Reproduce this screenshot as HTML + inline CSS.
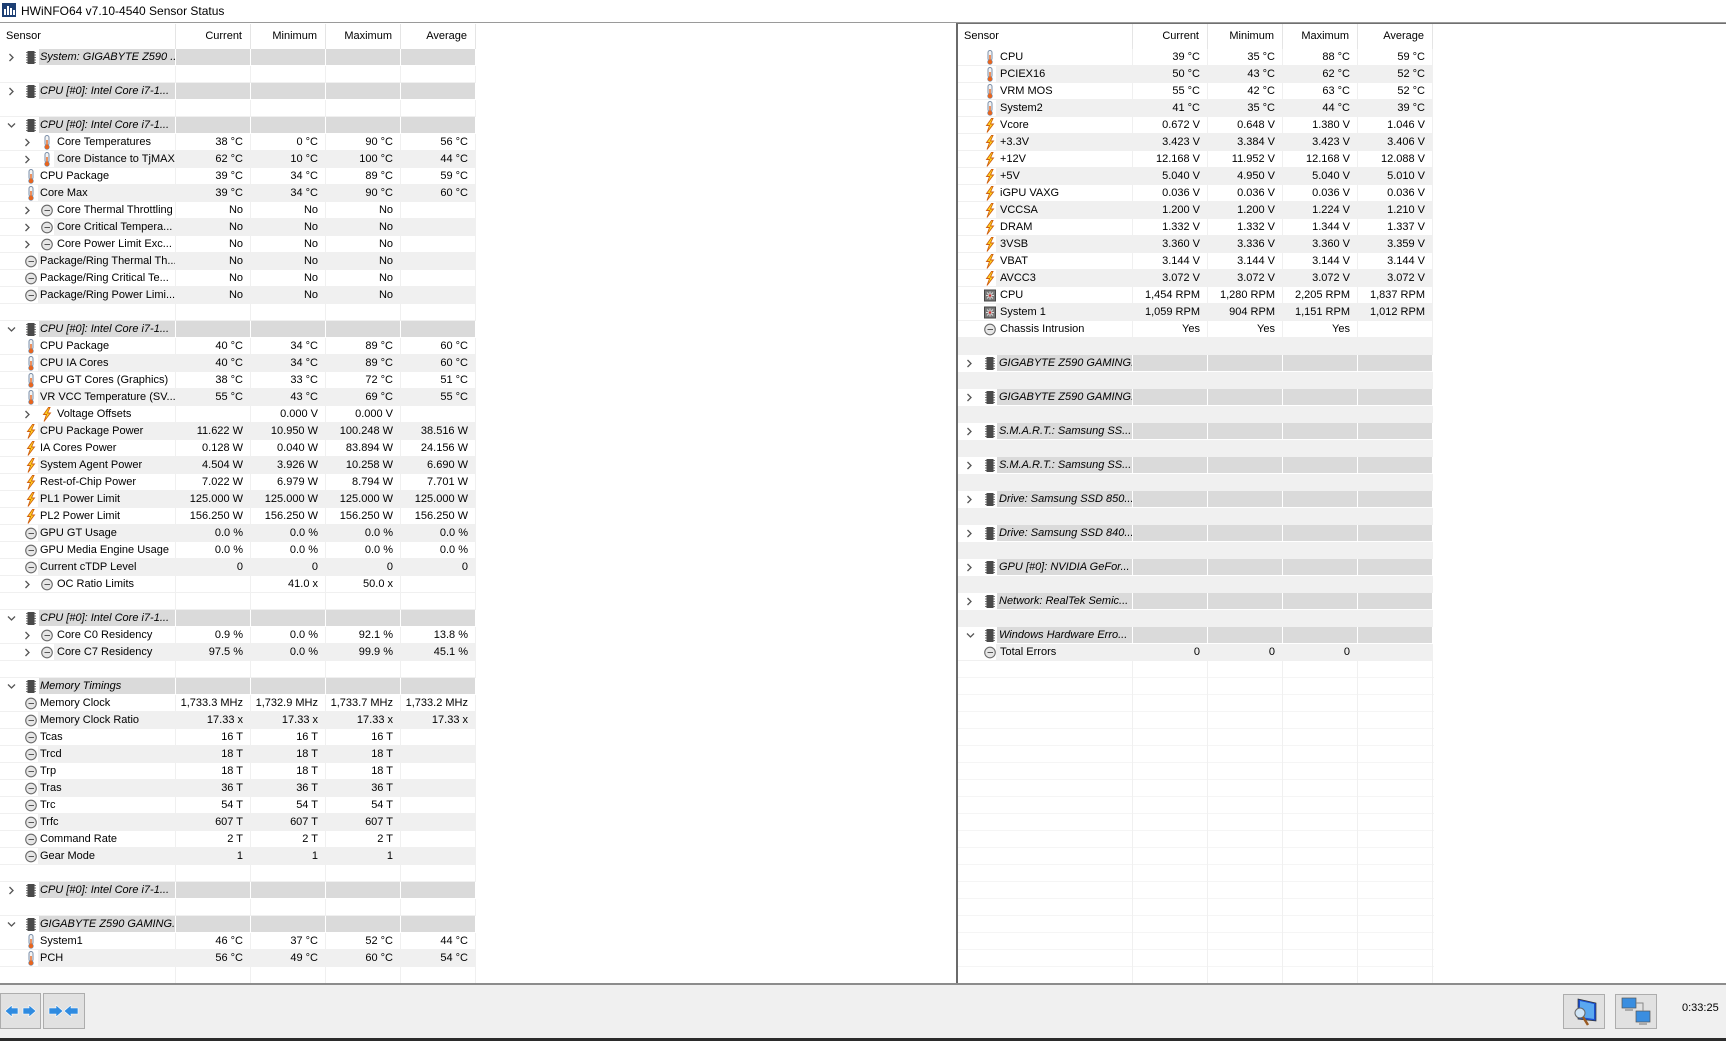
<!DOCTYPE html>
<html><head><meta charset="utf-8"><style>
*{margin:0;padding:0;box-sizing:border-box}
body{width:1726px;height:1041px;overflow:hidden;background:#fff;font-family:"Liberation Sans",sans-serif;font-size:11px;color:#000;position:relative}
#title{position:absolute;left:0;top:0;width:1726px;height:23px;background:#fff;border-bottom:1px solid #9a9a9a}
#title span{position:absolute;left:21px;top:4px;font-size:12px}
.pane{position:absolute;top:24px;height:959px;overflow:hidden;background:#fff}
#lp{left:0;width:955px}
#rp{left:958px;width:768px;border-top:1px solid #707070;top:23px}
#div{position:absolute;left:955px;top:23px;width:3px;height:960px;background:#e8e8e8;border-left:1px solid #fff;border-right:2px solid #6a6a6a}
.h{display:flex;height:25px;line-height:24px}
.h>div{width:75px;text-align:right;padding-right:8px;border-right:1px solid #e5e5e5}
.h>div.s{width:176px;text-align:left;padding-left:6px}
#rp .h>div.s{width:175px;padding-left:6px}
.r{display:flex;height:17px;line-height:17px}
.r>div{width:75px;text-align:right;padding-right:7px;border-right:1px solid #f0f0f0;border-bottom:1px solid #f0f0f0;white-space:nowrap;height:17px}
.r>div.s{width:176px;text-align:left;position:relative;padding-left:40px;padding-right:0;overflow:hidden}
#rp .r>div.s{width:175px;padding-left:42px}
.r.z>div{background:#f0f0f0}
.r.g>div{background:#dadada;border-right:1px solid #fff;border-bottom:1px solid #fff}
.r.g>div.s{background:linear-gradient(to right,#fff 39px,#dadada 39px);font-style:italic;padding-left:40px}
#rp .r.g>div.s{padding-left:41px}
.r.z.n>div.s,.r.n>div.s{background:linear-gradient(to right,#fff 38px,#f0f0f0 38px)}
.r.l2>div.s{padding-left:57px}
.ar{position:absolute;left:8px;top:4px;width:7px;height:9px}
.l2 .ar{left:24px}
.ic{position:absolute;left:25px;top:1px;width:12px;height:15px}
.l2 .ic{left:41px}
#rp .r .ic{left:26px}
#sb{position:absolute;left:0;top:983px;width:1726px;height:58px;background:#f0f0f0;border-top:2px solid #8c8c8c}
#sb .bl{position:absolute;left:0;bottom:0;height:3px;width:1726px;background:#2b2b2b}
.btn{position:absolute;top:8px;height:36px;border:1px solid #adadad;background:#e1e1e1}
#time{position:absolute;left:1682px;top:17px;font-size:11px}
</style></head><body>
<svg width="0" height="0" style="position:absolute">
<defs>
<symbol id="cr" viewBox="0 0 7 9"><path d="M1.5 1 L5 4.5 L1.5 8" fill="none" stroke="#555" stroke-width="1.3"/></symbol>
<symbol id="cd" viewBox="0 0 9 7"><path d="M1 1.5 L4.5 5 L8 1.5" fill="none" stroke="#555" stroke-width="1.3"/></symbol>
<symbol id="t" viewBox="0 0 12 15"><rect x="4" y="0.5" width="4" height="10" rx="2" fill="#f4f4f4" stroke="#7a8ea8"/><circle cx="6" cy="12" r="2.4" fill="#e8651e" stroke="#7a8ea8" stroke-width=".6"/><rect x="5.3" y="5" width="1.4" height="6" fill="#e8651e"/></symbol>
<symbol id="v" viewBox="0 0 12 15"><path d="M7.5 0.5 L2.5 7.5 L5.5 7.5 L3 14.5 L9.5 6 L6.5 6 L9 0.5 Z" fill="#ffd21e" stroke="#d06010" stroke-width=".9"/></symbol>
<symbol id="o" viewBox="0 0 12 15"><circle cx="6" cy="7.5" r="5.3" fill="#e6e6e6" stroke="#6a6a6a" stroke-width="1.1"/><path d="M6 7.5 L9 7.5 M3.5 7.5 L6 7.5" stroke="#555" stroke-width="1"/></symbol>
<symbol id="h" viewBox="0 0 12 15"><rect x="2.5" y="1" width="7" height="13" fill="#4a4a4a"/><path d="M1 2.5h1.5M1 5h1.5M1 7.5h1.5M1 10h1.5M1 12.5h1.5M9.5 2.5H11M9.5 5H11M9.5 7.5H11M9.5 10H11M9.5 12.5H11" stroke="#777"/></symbol>
<symbol id="f" viewBox="0 0 12 15"><rect x="0.5" y="2" width="11" height="11" fill="#777" stroke="#444"/><path d="M6 3.5v8M2 7.5h8M3 4.5l6 6M9 4.5l-6 6" stroke="#ddd" stroke-width="1"/><circle cx="6" cy="7.5" r="1.3" fill="#c33"/></symbol>
</defs></svg>

<div id="title"><svg style="position:absolute;left:2px;top:3px" width="14" height="14" viewBox="0 0 14 14"><rect width="14" height="14" fill="#1d3f74"/><rect x="2" y="6" width="2" height="6" fill="#fff"/><rect x="5" y="3" width="2" height="9" fill="#fff"/><rect x="8" y="5" width="2" height="7" fill="#fff"/><rect x="11" y="7" width="2" height="5" fill="#fff"/></svg><span>HWiNFO64 v7.10-4540 Sensor Status</span></div>

<div class="pane" id="lp">
<div class="h"><div class="s">Sensor</div><div>Current</div><div>Minimum</div><div>Maximum</div><div>Average</div></div>
<div class="r g"><div class="s"><svg class="ar"><use href="#cr"/></svg><svg class="ic"><use href="#h"/></svg>System: GIGABYTE Z590 ...</div><div></div><div></div><div></div><div></div></div>
<div class="r"><div class="s"></div><div></div><div></div><div></div><div></div></div>
<div class="r g"><div class="s"><svg class="ar"><use href="#cr"/></svg><svg class="ic"><use href="#h"/></svg>CPU [#0]: Intel Core i7-1...</div><div></div><div></div><div></div><div></div></div>
<div class="r"><div class="s"></div><div></div><div></div><div></div><div></div></div>
<div class="r g"><div class="s"><svg class="ar" style="width:9px;height:7px;top:5px;left:7px"><use href="#cd"/></svg><svg class="ic"><use href="#h"/></svg>CPU [#0]: Intel Core i7-1...</div><div></div><div></div><div></div><div></div></div>
<div class="r l2"><div class="s"><svg class="ar"><use href="#cr"/></svg><svg class="ic"><use href="#t"/></svg>Core Temperatures</div><div>38 °C</div><div>0 °C</div><div>90 °C</div><div>56 °C</div></div>
<div class="r z l2"><div class="s" style="background:linear-gradient(to right,#fff 54px,#f0f0f0 54px)"><svg class="ar"><use href="#cr"/></svg><svg class="ic"><use href="#t"/></svg>Core Distance to TjMAX</div><div>62 °C</div><div>10 °C</div><div>100 °C</div><div>44 °C</div></div>
<div class="r"><div class="s"><svg class="ic"><use href="#t"/></svg>CPU Package</div><div>39 °C</div><div>34 °C</div><div>89 °C</div><div>59 °C</div></div>
<div class="r z n"><div class="s"><svg class="ic"><use href="#t"/></svg>Core Max</div><div>39 °C</div><div>34 °C</div><div>90 °C</div><div>60 °C</div></div>
<div class="r l2"><div class="s"><svg class="ar"><use href="#cr"/></svg><svg class="ic"><use href="#o"/></svg>Core Thermal Throttling</div><div>No</div><div>No</div><div>No</div><div></div></div>
<div class="r z l2"><div class="s" style="background:linear-gradient(to right,#fff 54px,#f0f0f0 54px)"><svg class="ar"><use href="#cr"/></svg><svg class="ic"><use href="#o"/></svg>Core Critical Tempera...</div><div>No</div><div>No</div><div>No</div><div></div></div>
<div class="r l2"><div class="s"><svg class="ar"><use href="#cr"/></svg><svg class="ic"><use href="#o"/></svg>Core Power Limit Exc...</div><div>No</div><div>No</div><div>No</div><div></div></div>
<div class="r z n"><div class="s"><svg class="ic"><use href="#o"/></svg>Package/Ring Thermal Th...</div><div>No</div><div>No</div><div>No</div><div></div></div>
<div class="r"><div class="s"><svg class="ic"><use href="#o"/></svg>Package/Ring Critical Te...</div><div>No</div><div>No</div><div>No</div><div></div></div>
<div class="r z n"><div class="s"><svg class="ic"><use href="#o"/></svg>Package/Ring Power Limi...</div><div>No</div><div>No</div><div>No</div><div></div></div>
<div class="r"><div class="s"></div><div></div><div></div><div></div><div></div></div>
<div class="r g"><div class="s"><svg class="ar" style="width:9px;height:7px;top:5px;left:7px"><use href="#cd"/></svg><svg class="ic"><use href="#h"/></svg>CPU [#0]: Intel Core i7-1...</div><div></div><div></div><div></div><div></div></div>
<div class="r"><div class="s"><svg class="ic"><use href="#t"/></svg>CPU Package</div><div>40 °C</div><div>34 °C</div><div>89 °C</div><div>60 °C</div></div>
<div class="r z n"><div class="s"><svg class="ic"><use href="#t"/></svg>CPU IA Cores</div><div>40 °C</div><div>34 °C</div><div>89 °C</div><div>60 °C</div></div>
<div class="r"><div class="s"><svg class="ic"><use href="#t"/></svg>CPU GT Cores (Graphics)</div><div>38 °C</div><div>33 °C</div><div>72 °C</div><div>51 °C</div></div>
<div class="r z n"><div class="s"><svg class="ic"><use href="#t"/></svg>VR VCC Temperature (SV...</div><div>55 °C</div><div>43 °C</div><div>69 °C</div><div>55 °C</div></div>
<div class="r l2"><div class="s"><svg class="ar"><use href="#cr"/></svg><svg class="ic"><use href="#v"/></svg>Voltage Offsets</div><div></div><div>0.000 V</div><div>0.000 V</div><div></div></div>
<div class="r z n"><div class="s"><svg class="ic"><use href="#v"/></svg>CPU Package Power</div><div>11.622 W</div><div>10.950 W</div><div>100.248 W</div><div>38.516 W</div></div>
<div class="r"><div class="s"><svg class="ic"><use href="#v"/></svg>IA Cores Power</div><div>0.128 W</div><div>0.040 W</div><div>83.894 W</div><div>24.156 W</div></div>
<div class="r z n"><div class="s"><svg class="ic"><use href="#v"/></svg>System Agent Power</div><div>4.504 W</div><div>3.926 W</div><div>10.258 W</div><div>6.690 W</div></div>
<div class="r"><div class="s"><svg class="ic"><use href="#v"/></svg>Rest-of-Chip Power</div><div>7.022 W</div><div>6.979 W</div><div>8.794 W</div><div>7.701 W</div></div>
<div class="r z n"><div class="s"><svg class="ic"><use href="#v"/></svg>PL1 Power Limit</div><div>125.000 W</div><div>125.000 W</div><div>125.000 W</div><div>125.000 W</div></div>
<div class="r"><div class="s"><svg class="ic"><use href="#v"/></svg>PL2 Power Limit</div><div>156.250 W</div><div>156.250 W</div><div>156.250 W</div><div>156.250 W</div></div>
<div class="r z n"><div class="s"><svg class="ic"><use href="#o"/></svg>GPU GT Usage</div><div>0.0 %</div><div>0.0 %</div><div>0.0 %</div><div>0.0 %</div></div>
<div class="r"><div class="s"><svg class="ic"><use href="#o"/></svg>GPU Media Engine Usage</div><div>0.0 %</div><div>0.0 %</div><div>0.0 %</div><div>0.0 %</div></div>
<div class="r z n"><div class="s"><svg class="ic"><use href="#o"/></svg>Current cTDP Level</div><div>0</div><div>0</div><div>0</div><div>0</div></div>
<div class="r l2"><div class="s"><svg class="ar"><use href="#cr"/></svg><svg class="ic"><use href="#o"/></svg>OC Ratio Limits</div><div></div><div>41.0 x</div><div>50.0 x</div><div></div></div>
<div class="r"><div class="s"></div><div></div><div></div><div></div><div></div></div>
<div class="r g"><div class="s"><svg class="ar" style="width:9px;height:7px;top:5px;left:7px"><use href="#cd"/></svg><svg class="ic"><use href="#h"/></svg>CPU [#0]: Intel Core i7-1...</div><div></div><div></div><div></div><div></div></div>
<div class="r l2"><div class="s"><svg class="ar"><use href="#cr"/></svg><svg class="ic"><use href="#o"/></svg>Core C0 Residency</div><div>0.9 %</div><div>0.0 %</div><div>92.1 %</div><div>13.8 %</div></div>
<div class="r z l2"><div class="s" style="background:linear-gradient(to right,#fff 54px,#f0f0f0 54px)"><svg class="ar"><use href="#cr"/></svg><svg class="ic"><use href="#o"/></svg>Core C7 Residency</div><div>97.5 %</div><div>0.0 %</div><div>99.9 %</div><div>45.1 %</div></div>
<div class="r"><div class="s"></div><div></div><div></div><div></div><div></div></div>
<div class="r g"><div class="s"><svg class="ar" style="width:9px;height:7px;top:5px;left:7px"><use href="#cd"/></svg><svg class="ic"><use href="#h"/></svg>Memory Timings</div><div></div><div></div><div></div><div></div></div>
<div class="r"><div class="s"><svg class="ic"><use href="#o"/></svg>Memory Clock</div><div>1,733.3 MHz</div><div>1,732.9 MHz</div><div>1,733.7 MHz</div><div>1,733.2 MHz</div></div>
<div class="r z n"><div class="s"><svg class="ic"><use href="#o"/></svg>Memory Clock Ratio</div><div>17.33 x</div><div>17.33 x</div><div>17.33 x</div><div>17.33 x</div></div>
<div class="r"><div class="s"><svg class="ic"><use href="#o"/></svg>Tcas</div><div>16 T</div><div>16 T</div><div>16 T</div><div></div></div>
<div class="r z n"><div class="s"><svg class="ic"><use href="#o"/></svg>Trcd</div><div>18 T</div><div>18 T</div><div>18 T</div><div></div></div>
<div class="r"><div class="s"><svg class="ic"><use href="#o"/></svg>Trp</div><div>18 T</div><div>18 T</div><div>18 T</div><div></div></div>
<div class="r z n"><div class="s"><svg class="ic"><use href="#o"/></svg>Tras</div><div>36 T</div><div>36 T</div><div>36 T</div><div></div></div>
<div class="r"><div class="s"><svg class="ic"><use href="#o"/></svg>Trc</div><div>54 T</div><div>54 T</div><div>54 T</div><div></div></div>
<div class="r z n"><div class="s"><svg class="ic"><use href="#o"/></svg>Trfc</div><div>607 T</div><div>607 T</div><div>607 T</div><div></div></div>
<div class="r"><div class="s"><svg class="ic"><use href="#o"/></svg>Command Rate</div><div>2 T</div><div>2 T</div><div>2 T</div><div></div></div>
<div class="r z n"><div class="s"><svg class="ic"><use href="#o"/></svg>Gear Mode</div><div>1</div><div>1</div><div>1</div><div></div></div>
<div class="r"><div class="s"></div><div></div><div></div><div></div><div></div></div>
<div class="r g"><div class="s"><svg class="ar"><use href="#cr"/></svg><svg class="ic"><use href="#h"/></svg>CPU [#0]: Intel Core i7-1...</div><div></div><div></div><div></div><div></div></div>
<div class="r"><div class="s"></div><div></div><div></div><div></div><div></div></div>
<div class="r g"><div class="s"><svg class="ar" style="width:9px;height:7px;top:5px;left:7px"><use href="#cd"/></svg><svg class="ic"><use href="#h"/></svg>GIGABYTE Z590 GAMING...</div><div></div><div></div><div></div><div></div></div>
<div class="r"><div class="s"><svg class="ic"><use href="#t"/></svg>System1</div><div>46 °C</div><div>37 °C</div><div>52 °C</div><div>44 °C</div></div>
<div class="r z n"><div class="s"><svg class="ic"><use href="#t"/></svg>PCH</div><div>56 °C</div><div>49 °C</div><div>60 °C</div><div>54 °C</div></div>
<div class="r"><div class="s"></div><div></div><div></div><div></div><div></div></div>
<div class="r"><div class="s"></div><div></div><div></div><div></div><div></div></div>
</div>

<div id="div"></div>

<div class="pane" id="rp">
<div class="h"><div class="s">Sensor</div><div>Current</div><div>Minimum</div><div>Maximum</div><div>Average</div></div>
<div class="r"><div class="s"><svg class="ic"><use href="#t"/></svg>CPU</div><div>39 °C</div><div>35 °C</div><div>88 °C</div><div>59 °C</div></div>
<div class="r z n"><div class="s"><svg class="ic"><use href="#t"/></svg>PCIEX16</div><div>50 °C</div><div>43 °C</div><div>62 °C</div><div>52 °C</div></div>
<div class="r"><div class="s"><svg class="ic"><use href="#t"/></svg>VRM MOS</div><div>55 °C</div><div>42 °C</div><div>63 °C</div><div>52 °C</div></div>
<div class="r z n"><div class="s"><svg class="ic"><use href="#t"/></svg>System2</div><div>41 °C</div><div>35 °C</div><div>44 °C</div><div>39 °C</div></div>
<div class="r"><div class="s"><svg class="ic"><use href="#v"/></svg>Vcore</div><div>0.672 V</div><div>0.648 V</div><div>1.380 V</div><div>1.046 V</div></div>
<div class="r z n"><div class="s"><svg class="ic"><use href="#v"/></svg>+3.3V</div><div>3.423 V</div><div>3.384 V</div><div>3.423 V</div><div>3.406 V</div></div>
<div class="r"><div class="s"><svg class="ic"><use href="#v"/></svg>+12V</div><div>12.168 V</div><div>11.952 V</div><div>12.168 V</div><div>12.088 V</div></div>
<div class="r z n"><div class="s"><svg class="ic"><use href="#v"/></svg>+5V</div><div>5.040 V</div><div>4.950 V</div><div>5.040 V</div><div>5.010 V</div></div>
<div class="r"><div class="s"><svg class="ic"><use href="#v"/></svg>iGPU VAXG</div><div>0.036 V</div><div>0.036 V</div><div>0.036 V</div><div>0.036 V</div></div>
<div class="r z n"><div class="s"><svg class="ic"><use href="#v"/></svg>VCCSA</div><div>1.200 V</div><div>1.200 V</div><div>1.224 V</div><div>1.210 V</div></div>
<div class="r"><div class="s"><svg class="ic"><use href="#v"/></svg>DRAM</div><div>1.332 V</div><div>1.332 V</div><div>1.344 V</div><div>1.337 V</div></div>
<div class="r z n"><div class="s"><svg class="ic"><use href="#v"/></svg>3VSB</div><div>3.360 V</div><div>3.336 V</div><div>3.360 V</div><div>3.359 V</div></div>
<div class="r"><div class="s"><svg class="ic"><use href="#v"/></svg>VBAT</div><div>3.144 V</div><div>3.144 V</div><div>3.144 V</div><div>3.144 V</div></div>
<div class="r z n"><div class="s"><svg class="ic"><use href="#v"/></svg>AVCC3</div><div>3.072 V</div><div>3.072 V</div><div>3.072 V</div><div>3.072 V</div></div>
<div class="r"><div class="s"><svg class="ic"><use href="#f"/></svg>CPU</div><div>1,454 RPM</div><div>1,280 RPM</div><div>2,205 RPM</div><div>1,837 RPM</div></div>
<div class="r z n"><div class="s"><svg class="ic"><use href="#f"/></svg>System 1</div><div>1,059 RPM</div><div>904 RPM</div><div>1,151 RPM</div><div>1,012 RPM</div></div>
<div class="r"><div class="s"><svg class="ic"><use href="#o"/></svg>Chassis Intrusion</div><div>Yes</div><div>Yes</div><div>Yes</div><div></div></div>
<div class="r z"><div class="s"></div><div></div><div></div><div></div><div></div></div>
<div class="r g"><div class="s"><svg class="ar"><use href="#cr"/></svg><svg class="ic"><use href="#h"/></svg>GIGABYTE Z590 GAMING...</div><div></div><div></div><div></div><div></div></div>
<div class="r z"><div class="s"></div><div></div><div></div><div></div><div></div></div>
<div class="r g"><div class="s"><svg class="ar"><use href="#cr"/></svg><svg class="ic"><use href="#h"/></svg>GIGABYTE Z590 GAMING...</div><div></div><div></div><div></div><div></div></div>
<div class="r z"><div class="s"></div><div></div><div></div><div></div><div></div></div>
<div class="r g"><div class="s"><svg class="ar"><use href="#cr"/></svg><svg class="ic"><use href="#h"/></svg>S.M.A.R.T.: Samsung SS...</div><div></div><div></div><div></div><div></div></div>
<div class="r z"><div class="s"></div><div></div><div></div><div></div><div></div></div>
<div class="r g"><div class="s"><svg class="ar"><use href="#cr"/></svg><svg class="ic"><use href="#h"/></svg>S.M.A.R.T.: Samsung SS...</div><div></div><div></div><div></div><div></div></div>
<div class="r z"><div class="s"></div><div></div><div></div><div></div><div></div></div>
<div class="r g"><div class="s"><svg class="ar"><use href="#cr"/></svg><svg class="ic"><use href="#h"/></svg>Drive: Samsung SSD 850...</div><div></div><div></div><div></div><div></div></div>
<div class="r z"><div class="s"></div><div></div><div></div><div></div><div></div></div>
<div class="r g"><div class="s"><svg class="ar"><use href="#cr"/></svg><svg class="ic"><use href="#h"/></svg>Drive: Samsung SSD 840...</div><div></div><div></div><div></div><div></div></div>
<div class="r z"><div class="s"></div><div></div><div></div><div></div><div></div></div>
<div class="r g"><div class="s"><svg class="ar"><use href="#cr"/></svg><svg class="ic"><use href="#h"/></svg>GPU [#0]: NVIDIA GeFor...</div><div></div><div></div><div></div><div></div></div>
<div class="r z"><div class="s"></div><div></div><div></div><div></div><div></div></div>
<div class="r g"><div class="s"><svg class="ar"><use href="#cr"/></svg><svg class="ic"><use href="#h"/></svg>Network: RealTek Semic...</div><div></div><div></div><div></div><div></div></div>
<div class="r z"><div class="s"></div><div></div><div></div><div></div><div></div></div>
<div class="r g"><div class="s"><svg class="ar" style="width:9px;height:7px;top:5px;left:8px"><use href="#cd"/></svg><svg class="ic"><use href="#h"/></svg>Windows Hardware Erro...</div><div></div><div></div><div></div><div></div></div>
<div class="r z n"><div class="s"><svg class="ic"><use href="#o"/></svg>Total Errors</div><div>0</div><div>0</div><div>0</div><div></div></div>
</div>
<div style="position:absolute;left:958px;top:661px;width:476px;height:322px;background:
linear-gradient(to right,transparent 174px,#f0f0f0 174px,#f0f0f0 175px,transparent 175px,transparent 249px,#f0f0f0 249px,#f0f0f0 250px,transparent 250px,transparent 324px,#f0f0f0 324px,#f0f0f0 325px,transparent 325px,transparent 399px,#f0f0f0 399px,#f0f0f0 400px,transparent 400px,transparent 474px,#f0f0f0 474px,#f0f0f0 475px,transparent 475px),
repeating-linear-gradient(to bottom,#fff 0,#fff 16px,#f5f5f5 16px,#f5f5f5 17px)"></div>

<div id="sb">
<div class="btn" style="left:0;width:41px"><svg width="39" height="34" viewBox="0 0 39 34"><path d="M4 17 L11 11 L11 14 L17 14 L17 20 L11 20 L11 23 Z" fill="#2f8be0" stroke="#fff" stroke-width=".6"/><path d="M35 17 L28 11 L28 14 L22 14 L22 20 L28 20 L28 23 Z" fill="#2f8be0" stroke="#fff" stroke-width=".6"/></svg></div>
<div class="btn" style="left:43px;width:42px"><svg width="40" height="34" viewBox="0 0 40 34"><path d="M19 17 L12 11 L12 14 L5 14 L5 20 L12 20 L12 23 Z" fill="#2f8be0" stroke="#fff" stroke-width=".6"/><path d="M20 17 L27 11 L27 14 L34 14 L34 20 L27 20 L27 23 Z" fill="#2f8be0" stroke="#fff" stroke-width=".6"/></svg></div>
<div class="btn" style="left:1563px;width:42px;height:35px;top:9px"><svg width="40" height="33" viewBox="0 0 40 33"><path d="M14 4 L32 8 L32 26 L14 24 Z" fill="#1a4fd0" stroke="#333" stroke-width=".7"/><path d="M16 6 L30 9 L30 24 L16 22 Z" fill="#5aa8f0"/><circle cx="16" cy="18" r="5" fill="#cfe4f5" stroke="#666"/><path d="M19 22 L24 30" stroke="#9a5a20" stroke-width="2.5"/></svg></div>
<div class="btn" style="left:1615px;width:42px;height:35px;top:9px"><svg width="40" height="33" viewBox="0 0 40 33"><rect x="6" y="3" width="14" height="10" fill="#3a8ee0" stroke="#555" stroke-width=".7"/><rect x="20" y="16" width="14" height="11" fill="#3a8ee0" stroke="#555" stroke-width=".7"/><path d="M20 8 H27 V16" stroke="#888" fill="none"/><rect x="9" y="13" width="8" height="3" fill="#aaa"/><rect x="23" y="27" width="8" height="3" fill="#aaa"/></svg></div>
<div id="time">0:33:25</div>
<div class="bl"></div>
</div>
</body></html>
